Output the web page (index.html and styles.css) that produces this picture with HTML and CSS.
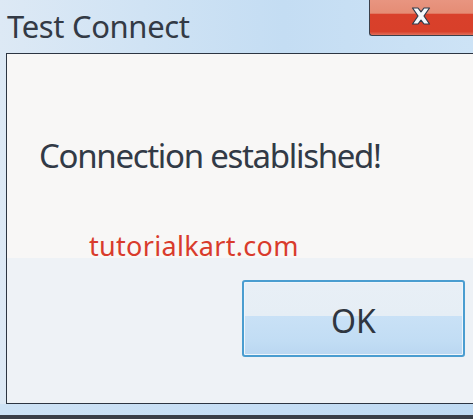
FILE: index.html
```html
<!DOCTYPE html>
<html>
<head>
<meta charset="utf-8">
<link rel="stylesheet" href="styles.css">
</head>
<body>
<div class="window">
  <div class="titlebar">
    <div class="title">Test Connect</div>
    <div class="close">
      <svg class="close-x" width="20" height="18" viewBox="0 0 20 18">
        <path d="M1.5 1 L7 1 L10 4.8 L13 1 L18.5 1 L13 9 L18.5 17 L13 17 L10 13.2 L7 17 L1.5 17 L7 9 Z" fill="#f4f8fc" stroke="#2f3a4a" stroke-width="1.2" stroke-linejoin="round"/>
      </svg>
    </div>
  </div>
  <div class="client">
    <div class="message-area">
      <div class="message">Connection established!</div>
      <div class="watermark">tutorialkart.com</div>
    </div>
    <div class="footer">
      <button class="ok">OK</button>
    </div>
  </div>
  <div class="bottom-strip"></div>
</div>
</body>
</html>
```
FILE: styles.css
```css
html, body {
  margin: 0;
  padding: 0;
}
body {
  width: 473px;
  height: 419px;
  overflow: hidden;
  font-family: "Noto Sans", "Open Sans", sans-serif;
}
.window {
  width: 473px;
  height: 419px;
  display: flex;
  flex-direction: column;
  background: linear-gradient(90deg, #dde9f5 0%, #d0e3f4 30%, #c4ddf3 60%, #cde3f6 100%);
}
.titlebar {
  height: 53px;
  display: flex;
  justify-content: space-between;
  align-items: flex-start;
  flex-shrink: 0;
}
.title {
  margin-left: 7px;
  margin-top: 8px;
  font-size: 31px;
  line-height: 36px;
  color: #333a45;
  letter-spacing: -0.35px;
}
.close {
  width: 104px;
  height: 36px;
  box-sizing: border-box;
  border-left: 1px solid #3a3f4a;
  border-bottom: 1px solid #3a3f4a;
  border-bottom-left-radius: 3px;
  background: linear-gradient(180deg, #e89580 0%, #e58c75 38%, #d9402b 40%, #d8402a 90%, #e0705c 100%);
  display: flex;
  justify-content: center;
  align-items: flex-start;
}
.close-x {
  margin-top: 7px;
  margin-right: 2px;
}
.client {
  margin-left: 6px;
  height: 351px;
  box-sizing: border-box;
  border-top: 1px solid #2c3542;
  border-left: 1px solid #2c3542;
  border-bottom: 1px solid #2c3542;
  display: flex;
  flex-direction: column;
  flex-shrink: 0;
}
.message-area {
  height: 204px;
  background: #f8f7f6;
  box-sizing: border-box;
  padding-top: 82px;
  padding-left: 32px;
}
.message {
  font-size: 33px;
  line-height: 40px;
  color: #323a46;
  letter-spacing: -1.3px;
}
.watermark {
  margin-top: 58px;
  margin-left: 50px;
  font-size: 27px;
  line-height: 24px;
  color: #d93b2c;
  letter-spacing: 0.3px;
}
.footer {
  flex: 1;
  background: #eef2f6;
  display: flex;
  justify-content: flex-end;
  align-items: flex-start;
  padding-top: 22px;
  padding-right: 8px;
}
.ok {
  width: 223px;
  height: 77px;
  box-sizing: border-box;
  border: 2px solid #4a9dd0;
  border-radius: 3px;
  background: linear-gradient(180deg, #e8eff6 0%, #e6eef5 46%, #c9e1f6 47%, #c2ddf4 80%, #bad7f1 100%);
  box-shadow: inset 0 0 0 1px #eef5fb;
  font-family: "Noto Sans", "Open Sans", sans-serif;
  font-size: 32px;
  line-height: 40px;
  color: #2f3640;
  padding: 4px 0 0 0;
}
.bottom-strip {
  flex: 1;
  border-bottom: 4px solid #3a3f48;
  background: linear-gradient(90deg, #cde2f5, #c4ddf4 60%, #bfdaf2);
}
```
